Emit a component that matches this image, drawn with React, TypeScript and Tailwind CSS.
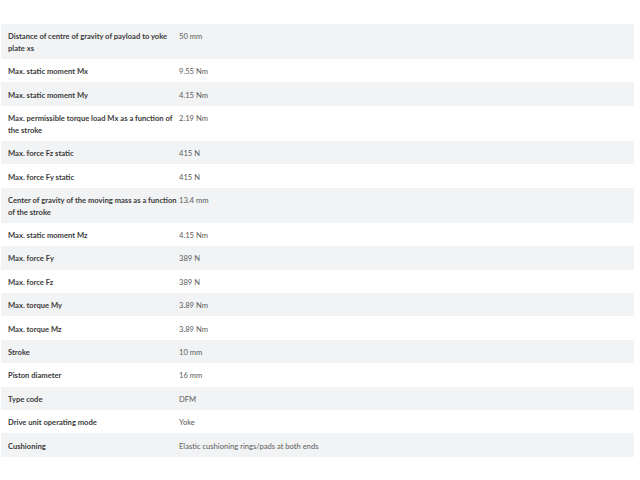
import React from "react";

const rows: [string, string][] = [
  ["Distance of centre of gravity of payload to yoke plate xs", "50 mm"],
  ["Max. static moment Mx", "9.55 Nm"],
  ["Max. static moment My", "4.15 Nm"],
  ["Max. permissible torque load Mx as a function of the stroke", "2.19 Nm"],
  ["Max. force Fz static", "415 N"],
  ["Max. force Fy static", "415 N"],
  ["Center of gravity of the moving mass as a function of the stroke", "13.4 mm"],
  ["Max. static moment Mz", "4.15 Nm"],
  ["Max. force Fy", "389 N"],
  ["Max. force Fz", "389 N"],
  ["Max. torque My", "3.89 Nm"],
  ["Max. torque Mz", "3.89 Nm"],
  ["Stroke", "10 mm"],
  ["Piston diameter", "16 mm"],
  ["Type code", "DFM"],
  ["Drive unit operating mode", "Yoke"],
  ["Cushioning", "Elastic cushioning rings/pads at both ends"],
];

export default function App() {
  return (
    <div className="w-[640px] h-[480px] bg-white pt-[24px] pl-[1px]" style={{ fontFamily: "Lato, 'Liberation Sans', sans-serif" }}>
      <div className="w-[633px] flex flex-col">
        {rows.map(([k, v], i) => (
          <div key={i} className={`flex items-start text-[7.6px] leading-[11.7px] pt-[7.2px] pb-[4.5px] ${i % 2 === 0 ? "bg-[#f2f3f4]" : "bg-white"}`}>
            <div className="w-[178px] shrink-0 pl-[7px] pr-0 font-bold text-[#3a3a3a]">{k}</div>
            <div className="text-[#5a5a5a]">{v}</div>
          </div>
        ))}
      </div>
    </div>
  );
}
